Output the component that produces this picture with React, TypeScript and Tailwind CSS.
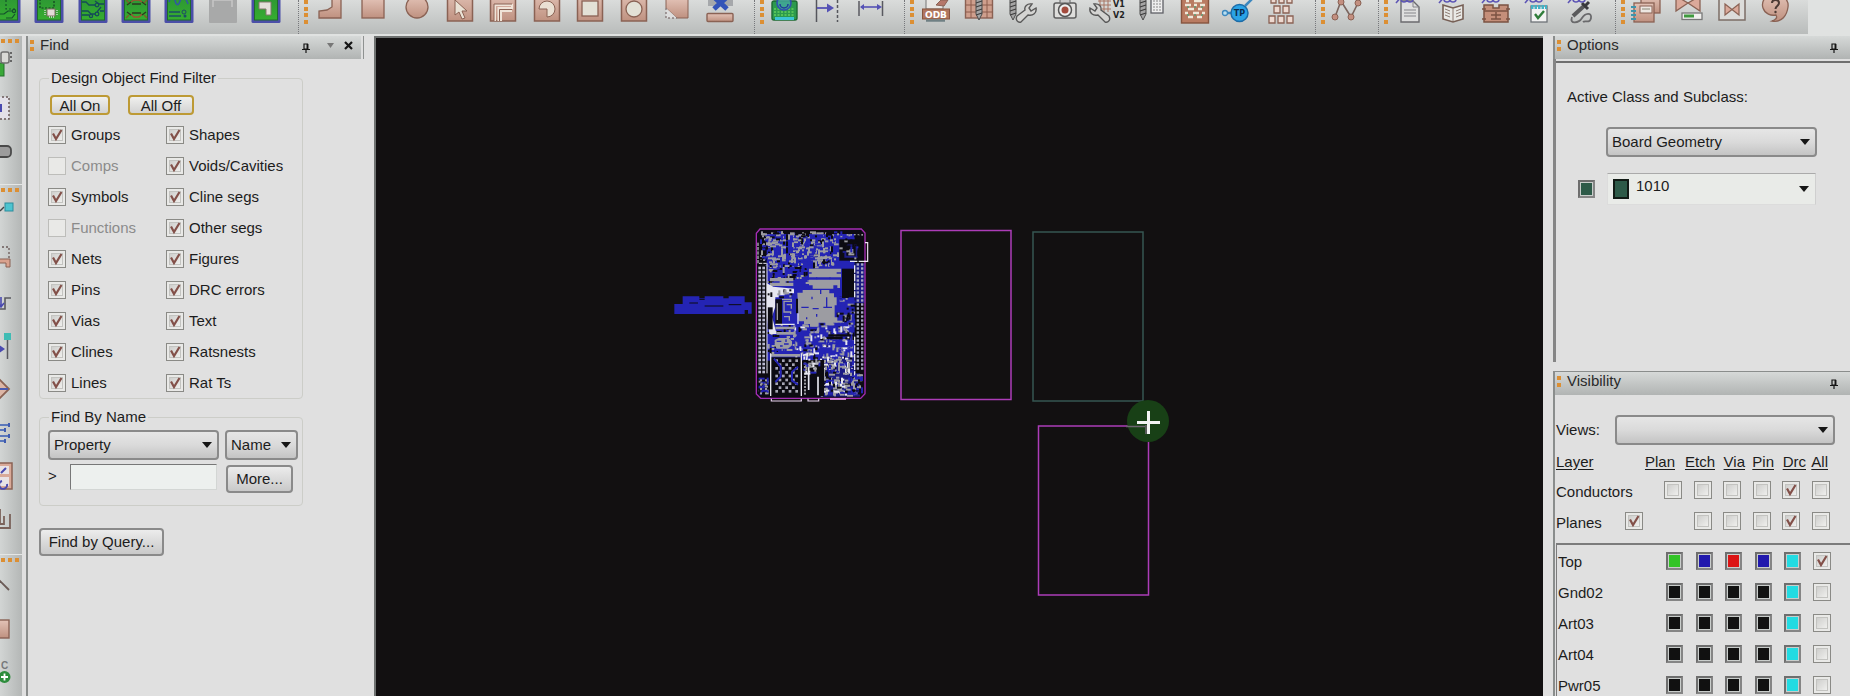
import React from "react";

/* ---------- shared drawing helpers ---------- */

const CU = "#8a6254";

function Defs() {
  return (
    <svg className="absolute h-0 w-0" aria-hidden="true">
      <defs>
        <linearGradient id="cu" x1="0" y1="0" x2="0" y2="1">
          <stop offset="0" stopColor="#e3c3b7" />
          <stop offset="1" stopColor="#bf9180" />
        </linearGradient>
        <linearGradient id="gr" x1="0" y1="0" x2="0" y2="1">
          <stop offset="0" stopColor="#2a8f35" />
          <stop offset="1" stopColor="#36ad30" />
        </linearGradient>
      </defs>
    </svg>
  );
}

const GreenBoard = ({ children }: { children?: React.ReactNode }) => (
  <g>
    <rect x="7.500" y="-10" width="29" height="33" rx="1.5" fill="#4b4ea8" />
    <rect x="10.5" y="-10" width="23" height="30" fill="url(#gr)" stroke="#1f6a2b" strokeWidth="1" />
    {children}
  </g>
);

const CuPlate = ({ children }: { children?: React.ReactNode }) => (
  <g>
    <rect x="9.500" y="-8" width="25" height="29" fill="url(#cu)" stroke={CU} strokeWidth="1.5" />
    {children}
  </g>
);

const Screw = ({ x }: { x: number }) => (
  <g>
    <path d={`M${x - 3} -2V14L${x} 20L${x + 3} 14V-2Z`} fill="#a5a5a5" stroke="#4c4c4c" />
    <path d={`M${x - 3} 3l6 -2M${x - 3} 7l6 -2M${x - 3} 11l6 -2M${x - 3} 15l6 -2`} stroke="#3d3d3d" strokeWidth="1.2" />
  </g>
);

const Wrench = ({ x, y }: { x: number; y: number }) => (
  <g transform={`translate(${x} ${y})`}>
    <path
      d="M1 12L9 6C8 3 11 -1 16 0L13 4L15 7L20 4C21 9 17 12 12 11L5 18C2 19 -1 16 1 12Z"
      fill="#d4d4d2"
      stroke="#575757"
      strokeWidth="1.4"
    />
  </g>
);

const Percent = () => (
  <g fill="none" stroke="#5d55b5" strokeWidth="1.6">
    <path d="M8 3L14 -4" />
    <circle cx="16" cy="-1" r="3" />
    <circle cx="22" cy="-1" r="3" />
  </g>
);

const ICONS: Record<string, React.ReactNode> = {
  traceBoard: (
    <GreenBoard>
      <g fill="none" stroke="#14502c" strokeWidth="1.2">
        <path d="M22 0V9H32" strokeDasharray="2 2" />
        <path d="M12 14H20L24 11H28M22 18H28L31 14" />
        <circle cx="30" cy="11" r="1.6" />
      </g>
    </GreenBoard>
  ),
  chipBoard: (
    <GreenBoard>
      <path d="M13 -1V8H27V-1" fill="none" stroke="#123f20" strokeWidth="1.2" strokeDasharray="2 1.5" />
      <rect x="20" y="9" width="8" height="7" fill="#e3dcd7" stroke="#7b6a60" />
      <path d="M18 10v5M30 10v5M22 17h5" stroke="#dedede" strokeWidth="1.3" strokeDasharray="1 1" />
    </GreenBoard>
  ),
  routeBoard: (
    <GreenBoard>
      <g fill="none" stroke="#154b58" strokeWidth="1.3">
        <path d="M11 2H15L18 5H24M24 1L28 4H33M11 11H17L20 14H24M11 15H18M26 12L30 7M33 11H29" />
        <circle cx="26" cy="5" r="1.8" />
        <circle cx="26" cy="14" r="1.8" />
        <circle cx="20" cy="16" r="1.6" />
      </g>
    </GreenBoard>
  ),
  meshBoard: (
    <GreenBoard>
      <g fill="none" strokeWidth="1.4">
        <path d="M17 2L20 0H25L28 2M17 14L20 17H25L28 14" stroke="#a14d33" />
        <path d="M13 5L17 2M13 12L17 15M32 5L28 2M32 12L28 15M18 4H27M18 13H27" stroke="#2c3a20" />
        <path d="M12 0l3 3M33 0l-3 3M12 18l3 -3M33 18l-3 -3" stroke="#7b5c2a" />
      </g>
    </GreenBoard>
  ),
  waveBoard: (
    <GreenBoard>
      <path d="M12 2C14 -5 17 -5 18 0S21 7 23 1S28 -4 31 4" fill="none" stroke="#3156a5" strokeWidth="1.5" />
      <path d="M12 12H23M12 16H24" stroke="#1c4d66" strokeWidth="1.4" />
      <circle cx="27" cy="12" r="2" fill="none" stroke="#1c4d66" />
      <circle cx="28" cy="16" r="1.5" fill="#1c4d66" />
    </GreenBoard>
  ),
  blank: (
    <g>
      <rect x="8" y="-2" width="28" height="25" rx="1" fill="#a8a9a9" />
      <path d="M12 7V0H31V7" fill="none" stroke="#c6c6c6" strokeWidth="1.5" />
    </g>
  ),
  shapeBoard: (
    <GreenBoard>
      <path d="M15 2H27V15H22V9H15Z" fill="#e4dfd9" stroke="#84776c" />
    </GreenBoard>
  ),
  poly: <path d="M24 -6H33V18H11V11L19 10L24 7Z" fill="url(#cu)" stroke={CU} strokeWidth="1.3" />,
  rect: <rect x="11" y="-2" width="22" height="20" fill="url(#cu)" stroke={CU} strokeWidth="1.3" />,
  circle: <circle cx="22" cy="7" r="11" fill="url(#cu)" stroke={CU} strokeWidth="1.3" />,
  select: (
    <CuPlate>
      <path d="M17 0V15L21 12L24 19L27 18L24 11H29Z" fill="#e9e1d4" stroke={CU} />
    </CuPlate>
  ),
  corner: (
    <CuPlate>
      <path d="M14 21V5H31V8H17.5V21M20 21V11H31" fill="none" stroke="#f0e4d8" strokeWidth="2" />
      <path d="M13 21V4H31M18.5 21V9.500H31" fill="none" stroke={CU} />
    </CuPlate>
  ),
  pie: (
    <CuPlate>
      <path d="M22 9H14A8 8 0 1 1 22 17Z" fill="#eae0d3" stroke={CU} />
    </CuPlate>
  ),
  squareVoid: (
    <CuPlate>
      <rect x="14" y="1" width="16" height="15" fill="#e3e1d6" stroke={CU} strokeWidth="1.3" />
    </CuPlate>
  ),
  circleVoid: (
    <CuPlate>
      <circle cx="22" cy="9" r="8" fill="#e3e1d6" stroke={CU} strokeWidth="1.3" />
    </CuPlate>
  ),
  cut: (
    <g>
      <path d="M11 -2H33V18H22L11 8Z" fill="url(#cu)" stroke={CU} />
      <path d="M11 8V18H22" fill="#ddd" stroke="#655" strokeDasharray="2 2" />
    </g>
  ),
  remove: (
    <g>
      <rect x="10" y="-2" width="25" height="8" fill="#a6a8ab" />
      <path d="M16 -3L29 9M29 -3L16 9" stroke="#3454b8" strokeWidth="5" />
      <rect x="9" y="13.500" width="26" height="8" rx="1" fill="url(#cu)" stroke={CU} strokeWidth="1.4" />
    </g>
  ),
  inspect: (
    <g>
      <rect x="9" y="1" width="25" height="19" rx="2" fill="#2c9a4d" stroke="#1d6a32" strokeWidth="1.4" />
      <path d="M11 9H32M11 12H32M11 15H32" stroke="#63d05e" strokeWidth="1.3" strokeDasharray="2 1.5" />
      <rect x="12" y="17" width="19" height="3" fill="#3bc5d4" />
      <circle cx="21" cy="3" r="7" fill="#45a7a0" fillOpacity="0.8" stroke="#3151b0" strokeWidth="1.600" />
      <path d="M17 4a4 4 0 0 0 8 0" fill="none" stroke="#203c9b" strokeWidth="1.5" />
    </g>
  ),
  offset: (
    <g>
      <path d="M10.500 0V22" stroke="#55565c" strokeWidth="1.5" />
      <path d="M31.500 0V22" stroke="#55565c" strokeWidth="1.5" strokeDasharray="3 2" />
      <path d="M11 8H22" stroke="#5552b5" strokeWidth="1.8" />
      <path d="M21 3.500L28 8L21 12.500Z" fill="#5552b5" />
    </g>
  ),
  measure: (
    <g>
      <path d="M10 1V16M33.500 1V16" stroke="#595a60" strokeWidth="1.5" />
      <path d="M12 7H31" stroke="#5552b5" strokeWidth="1.6" />
      <path d="M11 7L15 4V10ZM33 7L28 4V10Z" fill="#5552b5" />
    </g>
  ),
  odb: (
    <g>
      <rect x="12" y="-2" width="17" height="11" fill="#e9e7e4" stroke="#777" />
      <path d="M22 5L27 0H34L30 6Z" fill="#b5776a" stroke={CU} />
      <rect x="8.500" y="9" width="27" height="10" fill="#b0765f" stroke="#87543f" />
      <path d="M12 20.500H31" stroke="#6f8084" strokeWidth="2.500" />
      <text x="22" y="17.500" textAnchor="middle" fontSize="9" fontWeight="bold" fontFamily="DejaVu Sans" fill="#fff">ODB</text>
    </g>
  ),
  gridScrew: (
    <g>
      <rect x="8.500" y="-4" width="27" height="22" fill="#cf9f8d" stroke={CU} strokeWidth="1.4" />
      <path d="M8 5H36M8 12H36M14 -2V18M30 -2V18" stroke="#8c5c4c" />
      <Screw x={22} />
    </g>
  ),
  screwWrench: (
    <g>
      <Screw x={13} />
      <Wrench x={16} y={4} />
    </g>
  ),
  camera: (
    <g>
      <rect x="11" y="3" width="22" height="15" rx="2" fill="#dededc" stroke="#5d5d5d" strokeWidth="1.5" />
      <rect x="17" y="-2" width="10" height="5" fill="#c8c8c8" stroke="#666" />
      <circle cx="22" cy="10" r="6.500" fill="#eee" stroke="#555" strokeWidth="1.5" />
      <circle cx="22" cy="10" r="3.500" fill="#a34b3d" />
    </g>
  ),
  versions: (
    <g>
      <path d="M12 1H25M12 5H25M14 9H25M14 -2V12M18 -2V12M22 -2V12" stroke="#a77463" />
      <g transform="translate(27 0) scale(-1 1)">
        <Wrench x={3} y={4} />
      </g>
      <g fontSize="8" fontWeight="bold" fontFamily="DejaVu Sans" fill="#222">
        <text x="27" y="7">V1</text>
        <text x="27" y="18">V2</text>
      </g>
    </g>
  ),
  screwPage: (
    <g>
      <Screw x={13} />
      <rect x="21" y="-3" width="12" height="16" fill="#eee" stroke="#5f6066" strokeWidth="1.3" />
      <path d="M23 1H31M23 4H31M23 7H31M23 10H31" stroke="#888" strokeDasharray="2 1" />
    </g>
  ),
  padBoard: (
    <g>
      <rect x="8.500" y="-3" width="27" height="26" fill="#b97b62" stroke="#87543f" strokeWidth="1.4" />
      <path d="M12 5H18M21 5H24M27 5H32M15 9H21M25 9H29M12 13H15M20 13H26M29 13H32M15 17H20M24 17H29M13 1H16M21 1H29" stroke="#efe7d9" strokeWidth="2.500" />
      <path d="M14 7H32M14 15H32" stroke="#5c9c74" strokeWidth="1.500" strokeDasharray="2 5" />
    </g>
  ),
  testPoint: (
    <g>
      <path d="M10 13H18M29 6L36 -1" stroke="#3c87be" strokeWidth="2.500" />
      <circle cx="9" cy="13" r="2.500" fill="#b9dff0" stroke="#3c87be" strokeWidth="1.300" />
      <circle cx="23.500" cy="13" r="8.500" fill="#2aa3e6" stroke="#1c6ca8" strokeWidth="1.500" />
      <text x="23.500" y="16" textAnchor="middle" fontSize="8" fontWeight="bold" fontFamily="DejaVu Sans" fill="#0c2f52">TP</text>
    </g>
  ),
  boxes: (
    <g fill="#eed9d0" stroke={CU} strokeWidth="1.3">
      <path d="M12 -3h5v6h-5zM20 -3h5v6h-5zM28 -3h5v6h-5zM15 6h6v7h-6zM24 6h6v7h-6zM10 16h6v7h-6zM19 16h6v7h-6zM28 16h6v7h-6z" />
    </g>
  ),
  nodes: (
    <g>
      <path d="M11 17L17 1L27 17L34 3" fill="none" stroke="#7b665f" strokeWidth="1.600" />
      <g fill="#c38f80" stroke={CU}>
        <circle cx="11" cy="17" r="3" />
        <circle cx="17" cy="2" r="3" />
        <circle cx="27" cy="17" r="3" />
        <circle cx="34" cy="3" r="3" />
      </g>
    </g>
  ),
  page: (
    <g>
      <path d="M13 1H25L31 7V22H13Z" fill="#dfdfdf" stroke="#6b6b6f" strokeWidth="1.400" />
      <path d="M25 1V7H31M16 10H28M16 13H28M16 16H28" fill="none" stroke="#85858a" />
      <Percent />
    </g>
  ),
  book: (
    <g>
      <path d="M12 5L22 8L32 5V19L22 22L12 19Z" fill="#e9e9e6" stroke="#765f55" strokeWidth="1.600" />
      <path d="M22 8V21M14 9L19 11M14 12L19 14M14 15L19 17M30 9L25 11M30 12L25 14M30 15L25 17" stroke="#8c7b72" />
      <Percent />
    </g>
  ),
  chest: (
    <g>
      <path d="M10 5H19V8H25V5H34V22H10Z" fill="#c58f7a" stroke="#7b5343" strokeWidth="1.500" />
      <path d="M10 11H34M17 15H27M22 12V19M17 19H27M8 9H12M8 19H12M32 9H36M32 19H36" stroke="#7b5343" strokeWidth="1.500" />
      <Percent />
    </g>
  ),
  notes: (
    <g>
      <rect x="14" y="6" width="16" height="16" fill="#f2f2f2" stroke="#6d7277" strokeWidth="1.300" />
      <path d="M14 7H30" stroke="#43b2c5" strokeWidth="4" strokeDasharray="2.500 1" />
      <path d="M18 14L21 18L27 11" fill="none" stroke="#2f7d3a" strokeWidth="2.400" />
      <Percent />
    </g>
  ),
  probe: (
    <g>
      <path d="M13 16L24 6" stroke="#5a5a5c" strokeWidth="4" />
      <path d="M22 3L28 9M25 6L29 2" stroke="#39393b" strokeWidth="3" />
      <path d="M12 17C9 25 19 23 22 18S32 12 31 18S25 20 23 22" fill="none" stroke="#6a6a6c" strokeWidth="1.800" />
      <Percent />
    </g>
  ),
  binders: (
    <g>
      <rect x="17" y="-4" width="19" height="17" fill="url(#cu)" stroke={CU} strokeWidth="1.300" />
      <rect x="10" y="3" width="20" height="19" fill="url(#cu)" stroke={CU} strokeWidth="1.300" />
      <rect x="16" y="6" width="12" height="7" fill="#ede7e2" stroke={CU} />
      <path d="M18 9H26" stroke="#887" />
      <path d="M7 7H12M7 11H12M7 15H12M7 19H12" stroke="#3c95ad" strokeWidth="1.800" />
    </g>
  ),
  bowBar: (
    <g>
      <path d="M9 -4V11L21 3L33 11V-4L21 3Z" fill="#dba99a" stroke={CU} strokeWidth="1.300" />
      <rect x="15" y="13" width="20" height="6.500" fill="#f0f0ee" stroke="#777" strokeWidth="1.300" />
      <path d="M17 16H27" stroke="#3f9a3e" strokeWidth="3" />
    </g>
  ),
  bowFrame: (
    <g>
      <rect x="9" y="-4" width="26" height="24" fill="#dcdcda" stroke="#7c6d66" strokeWidth="1.500" />
      <path d="M15 4V15L22 9.500L29 15V4L22 9.500Z" fill="#dba99a" stroke={CU} strokeWidth="1.200" />
    </g>
  ),
  help: (
    <g>
      <path d="M22 -6C12 -6 8 2 10 8C12 14 18 16 23 15C25 18 22 20 19 21C29 23 34 15 35 7C36 0 30 -6 22 -6Z" fill="url(#cu)" stroke={CU} strokeWidth="1.300" />
      <path d="M19 3C19 -1 26 -1 26 3C26 6 22.500 6 22.500 9" fill="none" stroke="#4d3a34" strokeWidth="2" />
      <circle cx="22.500" cy="12" r="1.200" fill="#4d3a34" />
    </g>
  ),
};

/* ---------- toolbar ---------- */

const Grip = () => (
  <span className="flex h-6 w-1 flex-none flex-col justify-between" aria-hidden="true">
    <span className="h-1 bg-[#dc8f33]" />
    <span className="h-1 bg-[#dc8f33]" />
    <span className="h-1 bg-[#dc8f33]" />
    <span className="h-1 bg-[#dc8f33]" />
  </span>
);

function ToolGroup({ width, icons, first }: { width: string; icons: string[]; first?: boolean }) {
  return (
    <div
      className={
        first
          ? `flex flex-none ${width} pr-2.5`
          : `flex flex-none ${width} border-l border-dotted border-[#77787c] pl-[5px] pr-3`
      }
    >
      {!first && <Grip />}
      {icons.map((name, i) => (
        <button key={i} type="button" aria-label={name} className="flex min-w-0 flex-1 justify-center">
          <svg width="44" height="34" viewBox="0 0 44 34" className="flex-none">
            {ICONS[name]}
          </svg>
        </button>
      ))}
    </div>
  );
}

function Toolbar() {
  return (
    <div className="flex h-9 flex-none bg-[#e0e2e1]" role="toolbar">
      <div className="flex h-[34px] overflow-hidden bg-linear-to-b from-[#dadcdb] to-[#b9bcbb]">
        <div className="-ml-4 flex flex-none">
          <ToolGroup
            first
            width="w-[314px]"
            icons={["traceBoard", "chipBoard", "routeBoard", "meshBoard", "waveBoard", "blank", "shapeBoard"]}
          />
          <ToolGroup
            width="w-[456px]"
            icons={["poly", "rect", "circle", "select", "corner", "pie", "squareVoid", "circleVoid", "cut", "remove"]}
          />
          <ToolGroup width="w-[150px]" icons={["inspect", "offset", "measure"]} />
          <ToolGroup
            width="w-[411px]"
            icons={["odb", "gridScrew", "screwWrench", "camera", "versions", "screwPage", "padBoard", "testPoint", "boxes"]}
          />
          <ToolGroup width="w-[63px]" icons={["nodes"]} />
          <ToolGroup width="w-[237px]" icons={["page", "book", "chest", "notes", "probe"]} />
          <ToolGroup width="w-[193px]" icons={["binders", "bowBar", "bowFrame", "help"]} />
        </div>
      </div>
    </div>
  );
}

/* ---------- left rail ---------- */

const RAIL: { name: string; art: React.ReactNode }[][] = [
  [
    {
      name: "Place part",
      art: (
        <g>
          <rect x="-6" y="20" width="10" height="13" fill="#39a838" stroke="#22702a" />
          <rect x="1" y="9" width="8" height="11" rx="2" fill="#d9d9d6" stroke="#6f6f6f" strokeWidth="1.500" />
          <path d="M11 9V20" stroke="#666" strokeWidth="2" strokeDasharray="2 2" />
        </g>
      ),
    },
    {
      name: "Name part",
      art: (
        <g>
          <path d="M-2 11H9V33H-2" fill="#e3e1e8" stroke="#6a5a58" strokeWidth="1.500" strokeDasharray="2 2" />
          <path d="M-4 26V19H1V26" fill="none" stroke="#4a4ab0" strokeWidth="2" />
        </g>
      ),
    },
    {
      name: "Capsule",
      art: <rect x="-8" y="17" width="19" height="11" rx="4" fill="#9c9c9c" stroke="#4a4a4a" strokeWidth="1.800" />,
    },
  ],
  [
    {
      name: "Pin",
      art: (
        <g>
          <path d="M0 15L4 11" stroke="#444" strokeWidth="1.500" />
          <rect x="5" y="7" width="8" height="8" fill="#4dc4d0" stroke="#2c8c9c" />
        </g>
      ),
    },
    {
      name: "Bracket",
      art: (
        <g>
          <path d="M-2 8H9V20" fill="none" stroke="#6a5a58" strokeWidth="1.300" strokeDasharray="2 2" />
          <path d="M-4 20H10V28H6V24H-4Z" fill="#d9a28e" stroke={CU} />
        </g>
      ),
    },
    {
      name: "Delay tune",
      art: (
        <g fill="none" strokeWidth="1.600">
          <path d="M-2 27H5V16H11" stroke="#5a5a60" />
          <path d="M1 15V25M-2 21L1 25L4 21" stroke="#4a4ab0" />
        </g>
      ),
    },
    {
      name: "Slide",
      art: (
        <g>
          <path d="M7.500 10V34" stroke="#5a5a60" strokeWidth="1.500" />
          <rect x="4" y="8" width="7" height="7" fill="#3fbcb4" />
          <path d="M-2 19L5 24L-2 29Z" fill="#4a4ab0" />
        </g>
      ),
    },
    {
      name: "Miter",
      art: (
        <g>
          <path d="M-8 20L0 12L9 21L0 30Z" fill="#dcb6a6" stroke={CU} strokeWidth="1.800" />
          <path d="M-2 21H8" stroke="#4a5ab0" strokeWidth="2" />
        </g>
      ),
    },
    {
      name: "Bus route",
      art: (
        <g>
          <path d="M0 14H10M0 19H6M0 25H10M0 30H6" stroke="#5b78bb" strokeWidth="1.800" />
          <path d="M8 14h2M4 19h2M8 25h2M4 30h2" stroke="#3f5cb0" strokeWidth="4" />
        </g>
      ),
    },
    {
      name: "Fanout",
      art: (
        <g>
          <rect x="-8" y="9" width="20" height="26" fill="#d9aa99" stroke={CU} strokeWidth="1.500" />
          <rect x="-2" y="12" width="11" height="8" fill="#e9e3e6" />
          <rect x="-2" y="23" width="11" height="9" fill="#e9e3e6" />
          <path d="M1 19L6 14M2 27a4 4 0 1 0 5 3" fill="none" stroke="#4a4ab0" strokeWidth="2" />
        </g>
      ),
    },
    {
      name: "Tail",
      art: (
        <path d="M0 12V27H4V19M10 17V31H0" fill="none" stroke="#7b625a" strokeWidth="1.800" />
      ),
    },
  ],
  [
    { name: "Line", art: <path d="M-2 13L9 24" stroke="#6a5a56" strokeWidth="1.800" /> },
    {
      name: "Rectangle",
      art: <rect x="-8" y="11" width="17" height="18" fill="url(#cu)" stroke={CU} strokeWidth="1.400" />,
    },
    {
      name: "Add",
      art: (
        <g>
          <text x="1" y="17" fontSize="10" fontWeight="bold" fontFamily="Liberation Sans" fill="#77797b">C</text>
          <circle cx="4.500" cy="25" r="6" fill="#2d8d3c" />
          <path d="M4.500 21.500V28.500M1 25H8" stroke="#fff" strokeWidth="1.800" />
        </g>
      ),
    },
  ],
];

function Rail() {
  return (
    <nav className="flex w-[22px] flex-none flex-col overflow-hidden bg-linear-to-r from-[#d2d5d4] to-[#b4b7b6]" aria-label="Tools">
      {RAIL.map((group, i) => (
        <div key={i} className={i === 0 ? "flex h-[148px] flex-none flex-col" : "flex flex-none flex-col border-t border-[#e4e6e5] pb-3.5"}>
          <span
            className={i === 0 ? "mt-[3px] flex h-1 flex-none gap-[3px] pl-px" : "mb-1 mt-[3px] flex h-1 flex-none gap-[3px] pl-px"}
            aria-hidden="true"
          >
            <span className="w-1 bg-[#dc8f33]" />
            <span className="w-1 bg-[#dc8f33]" />
            <span className="w-1 bg-[#dc8f33]" />
          </span>
          {group.map((t) => (
            <button key={t.name} type="button" aria-label={t.name} className="h-[43px] flex-none">
              <svg width="22" height="43" viewBox="0 0 22 43">
                {t.art}
              </svg>
            </button>
          ))}
        </div>
      ))}
    </nav>
  );
}

/* ---------- widgets ---------- */

const Pin = () => (
  <svg width="10" height="12" viewBox="0 0 10 12">
    <path d="M3 2H6.500V7H3Z" fill="none" stroke="#151515" strokeWidth="1.200" />
    <path d="M6.500 2V7" stroke="#151515" strokeWidth="1.800" />
    <path d="M1 7.500H9M5 8V11" stroke="#151515" strokeWidth="1.200" />
  </svg>
);

function PanelTitle({ title, children }: { title: string; children?: React.ReactNode }) {
  return (
    <header className="flex h-[23px] flex-none items-center bg-linear-to-b from-[#d6d9d8] to-[#b1b4b3] pl-0.5">
      <span className="mr-1.5 flex flex-col gap-[3px] pb-1" aria-hidden="true">
        <span className="h-1 w-1 bg-[#dc8f33]" />
        <span className="h-1 w-1 bg-[#dc8f33]" />
      </span>
      <h2 className="flex-1 pb-1.5 text-[15px] leading-4 text-[#2a2a2a]">{title}</h2>
      {children}
    </header>
  );
}

type TickProps = { label?: string; name: string; checked?: boolean; disabled?: boolean };

function Tick({ label, name, checked, disabled }: TickProps) {
  const border = disabled && !checked ? "border-[#bdbdba]" : "border-[#8a8a86]";
  return (
    <label className={disabled ? "flex items-center gap-[5px] text-[#8b8b8b]" : "flex items-center gap-[5px]"}>
      <span className="grid h-[18px] w-[18px] flex-none place-items-center">
        <input
          type="checkbox"
          defaultChecked={checked}
          disabled={disabled}
          aria-label={label ? undefined : name}
          className={`peer col-start-1 row-start-1 h-[18px] w-[18px] appearance-none border ${border} bg-[#e9e9e7]`}
        />
        {!disabled && (
          <span className="pointer-events-none col-start-1 row-start-1 h-3 w-3 border border-[#c3c3c0] bg-linear-to-br from-[#cfcfcd] to-[#efefed]" />
        )}
        <svg
          width="16"
          height="16"
          viewBox="0 0 16 16"
          className="pointer-events-none invisible col-start-1 row-start-1 peer-checked:visible"
        >
          <path d="M4 6.500L7 12L12.500 3" fill="none" stroke="#835049" strokeWidth="2.200" />
        </svg>
      </span>
      {label}
    </label>
  );
}

function Drop({ label, options, className }: { label: string; options: string[]; className: string }) {
  return (
    <span className={`grid h-[30px] items-center ${className}`}>
      <select
        aria-label={label}
        className="col-start-1 row-start-1 h-full w-full appearance-none rounded border-2 border-[#8a8a8a] bg-linear-to-b from-[#e6e6e6] via-[#dadada] to-[#c4c4c4] pl-1 text-[15px]"
      >
        {options.map((o) => (
          <option key={o}>{o}</option>
        ))}
      </select>
      <Arrow />
    </span>
  );
}

const Arrow = () => (
  <svg width="10" height="6" viewBox="0 0 10 6" className="pointer-events-none col-start-1 row-start-1 mr-[7px] justify-self-end">
    <path d="M0 0H10L5 6Z" fill="#161616" />
  </svg>
);

const PUSH = "h-7 rounded border-2 border-[#8a8a8a] bg-linear-to-b from-[#ececec] to-[#c9c9c9] text-[15px] leading-5";
const GOLD = "h-5 rounded border-2 border-[#bd9a35] bg-linear-to-b from-[#f0f0ee] to-[#d2d2d2] pt-px text-[15px] leading-4";

/* ---------- find panel ---------- */

const FILTERS: [TickProps, TickProps][] = [
  [{ name: "Groups", checked: true }, { name: "Shapes", checked: true }],
  [{ name: "Comps", disabled: true }, { name: "Voids/Cavities", checked: true }],
  [{ name: "Symbols", checked: true }, { name: "Cline segs", checked: true }],
  [{ name: "Functions", disabled: true }, { name: "Other segs", checked: true }],
  [{ name: "Nets", checked: true }, { name: "Figures", checked: true }],
  [{ name: "Pins", checked: true }, { name: "DRC errors", checked: true }],
  [{ name: "Vias", checked: true }, { name: "Text", checked: true }],
  [{ name: "Clines", checked: true }, { name: "Ratsnests", checked: true }],
  [{ name: "Lines", checked: true }, { name: "Rat Ts", checked: true }],
];

function FindPanel() {
  return (
    <section className="ml-1 flex w-[348px] flex-none flex-col border-l-2 border-[#8a8d8c] bg-[#e0e0e0]">
      <div className="mr-[10px] border-r border-[#8f9291] pr-0.5">
        <PanelTitle title="Find">
          <button type="button" aria-label="Pin panel" className="mr-4"><Pin /></button>
          <button type="button" aria-label="Panel menu" className="mr-2.5 pb-1">
            <svg width="7" height="5" viewBox="0 0 7 5"><path d="M0 0H7L3.500 5Z" fill="#777" /></svg>
          </button>
          <button type="button" aria-label="Close panel" className="mr-2 pb-1">
            <svg width="9" height="9" viewBox="0 0 9 9"><path d="M1 1L8 8M8 1L1 8" stroke="#151515" strokeWidth="2.200" /></svg>
          </button>
        </PanelTitle>
      </div>
      <div className="flex flex-col items-start pl-[11px] pt-[9px]">
        <fieldset className="w-[264px] rounded-sm border border-[#cccdc8] px-2">
          <legend className="px-0.5 leading-5 ml-px">Design Object Find Filter</legend>
          <div className="mt-[7px] flex gap-[18px] pl-0.5">
            <button type="button" className={`${GOLD} w-[60px]`}>All On</button>
            <button type="button" className={`${GOLD} w-[66px]`}>All Off</button>
          </div>
          <div className="mt-1 grid grid-cols-[118px_1fr]">
            {FILTERS.map(([a, b]) => (
              <React.Fragment key={a.name}>
                <div className="flex h-[31px] items-center"><Tick {...a} label={a.name} /></div>
                <div className="flex h-[31px] items-center"><Tick {...b} label={b.name} /></div>
              </React.Fragment>
            ))}
          </div>
        </fieldset>
        <fieldset className="mt-2 w-[264px] rounded-sm border border-[#cccdc8] pb-3 pl-2 pr-1">
          <legend className="px-0.5 leading-5 ml-px">Find By Name</legend>
          <div className="mt-[3px] flex gap-1.5">
            <Drop label="Find by" options={["Property", "Net", "Symbol"]} className="w-[171px]" />
            <Drop label="Match" options={["Name", "List"]} className="w-[73px]" />
          </div>
          <div className="mt-1 flex">
            <label htmlFor="find-name" className="w-[22px] leading-6">&gt;</label>
            <input
              id="find-name"
              type="text"
              className="h-[26px] w-[147px] border border-b-[#d3d6d4] border-l-[#777] border-r-[#d3d6d4] border-t-[#777] bg-[#edf0ee] px-1"
            />
            <button type="button" className={`${PUSH} ml-[9px] mt-px w-[67px]`}>More...</button>
          </div>
        </fieldset>
        <button type="button" className={`${PUSH} mt-[22px] w-[125px]`}>Find by Query...</button>
      </div>
    </section>
  );
}

/* ---------- board drawing ---------- */

const BLUE = "#2424b4";
const GREY = "#9c9ca2";
const WHITE = "#e6e6f0";
const INK = "#0c0b12";

function noise(seed: number) {
  let s = seed;
  return () => {
    s = (s * 1103515245 + 12345) & 0x7fffffff;
    return s / 0x7fffffff;
  };
}

/* Scatters short horizontal and vertical runs of copper over a region. */
function scatter(seed: number, x: number, y: number, w: number, h: number, n: number, colors: string[]) {
  const r = noise(seed);
  const out: React.ReactNode[] = [];
  for (let i = 0; i < n; i++) {
    const long = 6 + Math.floor(r() * 4) * 4;
    const flat = r() > 0.45;
    const rw = flat ? long : 6;
    const rh = flat ? 6 : long;
    const rx = x + Math.floor((r() * Math.max(w - rw, 1)) / 3) * 3;
    const ry = y + Math.floor((r() * Math.max(h - rh, 1)) / 3) * 3;
    out.push(<rect key={`${seed}-${i}`} x={rx} y={ry} width={rw} height={rh} fill={colors[Math.floor(r() * colors.length)]} />);
  }
  return out;
}

function pads(x: number, y: number, cols: number, rows: number, dx: number, dy: number, size: number, fill: string) {
  const out: React.ReactNode[] = [];
  for (let i = 0; i < cols; i++)
    for (let j = 0; j < rows; j++)
      out.push(<rect key={`${x}-${y}-${i}-${j}`} x={x + i * dx} y={y + j * dy} width={size} height={size} fill={fill} />);
  return out;
}

function Board() {
  return (
    <svg x="660" y="210" width="230" height="210" viewBox="0 0 690 630">
      <path d="M43 282H68V259H118V265H134V259H190V265H206V259H254V277H275V311H264V300H254V312H43Z" fill={BLUE} />
      <path d="M88 279H114M134 288H190M206 284H244M118 268H134" stroke={INK} strokeWidth="3" />
      <path d="M300 57H604L615 69V551L602 565H302L289 552V70Z" fill={INK} />

      <rect x="320" y="72" width="264" height="380" fill={BLUE} />
      <rect x="480" y="440" width="120" height="120" fill="#1c1c84" />
      {scatter(7, 300, 64, 240, 114, 330, [GREY, GREY, GREY, BLUE, BLUE, INK])}
      {scatter(11, 320, 165, 130, 60, 60, [GREY, BLUE, INK])}
      {scatter(19, 400, 340, 190, 110, 210, [GREY, GREY, BLUE, BLUE, INK, WHITE])}
      {scatter(23, 480, 440, 110, 122, 190, [GREY, GREY, BLUE, INK, WHITE])}
      {scatter(29, 530, 230, 60, 120, 70, [GREY, BLUE, BLUE, INK])}
      {scatter(43, 320, 345, 90, 90, 50, [GREY, BLUE, INK])}

      <rect x="538" y="88" width="74" height="64" fill={INK} />
      <path d="M556 106H590V140H556V126H548" fill="none" stroke="#1c1c84" strokeWidth="6" />
      <rect x="568" y="117" width="12" height="12" fill={GREY} />
      {pads(560, 72, 5, 1, 11, 10, 5, GREY)}
      {scatter(47, 538, 64, 70, 90, 26, [BLUE, GREY, INK])}
      <rect x="546" y="176" width="36" height="86" fill={INK} />
      <path d="M447 176H543V202H447ZM447 209H540V234H532V226H520V236H458V226H447Z" fill={GREY} />
      <path d="M447 189H455M530 189H543M470 202V208M510 202V208" stroke={BLUE} strokeWidth="4" />
      <path d="M412 248H428V240H508V250H522V262H530V286H524V322H532V338H520V346H496V338H476V350H450V342H432V334H416Z" fill={GREY} />
      <path d="M424 292H446M458 296H476M490 292H516M482 240V252M456 260V268M500 262V290M470 312V320M440 322V328" stroke={BLUE} strokeWidth="4" />
      <path d="M330 204H400V214H330ZM330 218H400V228H330Z" fill={GREY} />
      <path d="M318 218L340 230L402 236V250H374V256H356V262H346V290L336 320L350 372H328L318 300Z" fill={WHITE} />
      {scatter(53, 322, 238, 80, 28, 14, [GREY, INK])}
      <rect x="323" y="292" width="15" height="66" fill={INK} />
      <path d="M346 268H366V344H346ZM408 266H414V310H408Z" fill={INK} />
      <path d="M366 268H394V274H372V306H392V312M380 284H394V296M372 320H388V332M352 280V330" fill="none" stroke={GREY} strokeWidth="4" />
      <path d="M346 343H404M414 310V342" stroke={WHITE} strokeWidth="4" />
      <path d="M346 350H404V358H346ZM350 366H402V374H350ZM344 390L356 384H386L396 394V406L384 416H350L344 406Z" fill={GREY} />
      <path d="M350 394H364M372 402H386M360 408H368M378 388V396" stroke={BLUE} strokeWidth="4" />
      <path d="M330 432H420V440H330Z" fill={GREY} />

      <rect x="290" y="168" width="30" height="330" fill={INK} />
      {pads(295, 170, 2, 27, 12, 12, 8, "#b9b9d0")}
      <path d="M321 160V490" stroke={WHITE} strokeWidth="3" />
      <path d="M294 98V160H320" fill="none" stroke={WHITE} strokeWidth="3" strokeDasharray="10 3" />
      <rect x="586" y="160" width="28" height="120" fill="#1c1c84" />
      <rect x="586" y="280" width="28" height="210" fill={INK} />
      {pads(590, 160, 2, 27, 13, 12, 7, "#a9a9c6")}
      <path d="M584 166V262M584 380V500M570 154H620" stroke={WHITE} strokeWidth="4" strokeDasharray="22 4" />
      {scatter(59, 576, 490, 36, 70, 34, [BLUE, GREY, INK])}
      <rect x="546" y="244" width="20" height="20" fill={INK} />
      <path d="M505 376H572M500 384H548" stroke={INK} strokeWidth="7" />

      <rect x="332" y="442" width="92" height="116" fill={INK} />
      {pads(346, 448, 4, 5, 20, 23, 8, "#a5a5b4")}
      {pads(356, 460, 3, 4, 20, 23, 8, "#a5a5b4")}
      <path d="M342 446L362 470V500L346 516M414 470L396 486V512L414 524" fill="none" stroke={BLUE} strokeWidth="6" />
      <path d="M332 430V558M424 430V558" stroke={WHITE} strokeWidth="4" />
      <rect x="428" y="450" width="64" height="108" fill={INK} />
      {pads(432, 458, 1, 10, 10, 10, 6, GREY)}
      <path d="M446 462V540M474 500V556M428 436L442 432L440 450" fill="none" stroke={WHITE} strokeWidth="5" />
      {scatter(31, 430, 446, 60, 50, 22, [WHITE, BLUE, GREY])}
      {scatter(37, 296, 500, 34, 56, 26, [BLUE, BLUE, GREY, INK])}
      {pads(300, 508, 2, 4, 15, 13, 6, GREY)}

      <path d="M300 57H604L615 69V551L602 565H302L289 552V70Z" fill="none" stroke="#a42cb4" strokeWidth="4" />
      <path d="M615 98H623V154H612" fill="none" stroke="#f0e4f6" strokeWidth="3.500" />
      <path d="M334 566V573H424V566M444 566V573H476V566" fill="none" stroke="#e9d3f2" strokeWidth="3.500" />
      <path d="M510 567H558" stroke="#ec9cf0" strokeWidth="5" />
    </svg>
  );
}

function DesignCanvas() {
  return (
    <main className="min-w-0 flex-1 overflow-hidden border-l-2 border-t-2 border-[#6f7271] bg-[#121011]">
      <svg width="100%" height="100%" role="img" aria-label="Board layout">
        <g transform="translate(-376 -38)">
          <Board />
          <g fill="none" strokeWidth="1.500">
            <rect x="901" y="230.500" width="110" height="169" stroke="#ac3cb8" />
            <rect x="1033" y="232" width="110" height="169" stroke="#365652" />
            <rect x="1038.500" y="426" width="110" height="169" stroke="#ac3cb8" />
          </g>
          <circle cx="1148" cy="421" r="21" fill="#184016" />
          <path d="M1126 426.500H1145M1146 425V434" stroke="#6d6470" strokeWidth="1.500" />
          <path d="M1148.500 411V434M1137 422.500H1160" stroke="#f3f3f3" strokeWidth="3" />
        </g>
      </svg>
    </main>
  );
}

/* ---------- right side ---------- */

function Chip({ color, name }: { color: string; name: string }) {
  return (
    <button
      type="button"
      aria-label={name}
      className="block h-[18px] w-[17px] border-2 border-b-[#858585] border-l-[#6e6e6e] border-r-[#858585] border-t-[#6e6e6e] bg-[#c9cdcb] p-px"
    >
      <span className={`block h-full w-full ${color}`} />
    </button>
  );
}

function OptionsPanel() {
  return (
    <section className="flex h-[326px] flex-none flex-col">
      <div className="border-l-2 border-[#8a8d8c]">
        <PanelTitle title="Options">
          <button type="button" aria-label="Pin options" className="mr-[11px]"><Pin /></button>
        </PanelTitle>
      </div>
      <div className="flex-1 border-l-[3px] border-[#858585] pt-0.5">
        <div className="flex flex-col border-t-2 border-[#6f6f6f] pl-[11px] pt-6">
          <p className="leading-5">Active Class and Subclass:</p>
          <div className="mt-5 pl-[39px]">
            <Drop label="Active class" options={["Board Geometry", "Etch"]} className="w-[211px]" />
          </div>
          <div className="mt-4 flex items-center gap-3 pl-[11px]">
            <Chip color="bg-[#2d5a48]" name="Subclass color" />
            <span className="grid h-8 w-[209px] items-center">
              <select
                aria-label="Active subclass"
                className="col-start-1 row-start-1 h-full w-full appearance-none border border-t-[#aaaaaa] border-l-[#dcdcdc] border-r-[#cfcfcf] border-b-[#dcdcdc] bg-[#e9ebe8] pb-1.5 pl-7 text-[15px]"
              >
                <option>1010</option>
                <option>Outline</option>
              </select>
              <span className="pointer-events-none col-start-1 row-start-1 ml-1.5 h-5 w-4 border-2 border-[#111a15] bg-[#2d5a48]" />
              <Arrow />
            </span>
          </div>
        </div>
      </div>
    </section>
  );
}

const COLS = (
  <colgroup>
    <col className="w-[62px]" />
    <col className="w-10" />
    <col className="w-[30px]" />
    <col className="w-[29px]" />
    <col className="w-[30px]" />
    <col className="w-[29px]" />
    <col className="w-[30px]" />
    <col className="w-[29px]" />
  </colgroup>
);

const BLACK = "bg-[#111111]";
const CYAN = "bg-[#22dbe2]";
const HEAD = "p-0 font-normal underline underline-offset-2";

const LAYERS = [
  { name: "Top", colors: ["bg-[#32c427]", "bg-[#2119ad]", "bg-[#dc1414]", "bg-[#2119ad]", CYAN], all: true },
  { name: "Gnd02", colors: [BLACK, BLACK, BLACK, BLACK, CYAN], all: false },
  { name: "Art03", colors: [BLACK, BLACK, BLACK, BLACK, CYAN], all: false },
  { name: "Art04", colors: [BLACK, BLACK, BLACK, BLACK, CYAN], all: false },
  { name: "Pwr05", colors: [BLACK, BLACK, BLACK, BLACK, CYAN], all: false },
];

function VisibilityPanel() {
  return (
    <section className="mt-[9px] flex min-h-0 flex-1 flex-col border-l-2 border-t border-[#8a8d8c]">
      <PanelTitle title="Visibility">
        <button type="button" aria-label="Pin visibility" className="mr-[11px]"><Pin /></button>
      </PanelTitle>
      <div className="mt-5 flex items-center pl-px">
        <span className="w-[59px]">Views:</span>
        <Drop label="Views" options={[""]} className="w-[220px]" />
      </div>
      <table className="ml-px mt-1 w-[279px] table-fixed border-collapse">
        {COLS}
        <thead>
          <tr className="h-[25px]">
            <th className={`${HEAD} text-left`}>Layer</th>
            <th colSpan={2} className={HEAD}><div className="flex justify-end pr-[13px]">Plan</div></th>
            <th className={HEAD}><div className="flex justify-end pr-0.5">Etch</div></th>
            <th className={HEAD}><div className="flex justify-end pr-0.5">Via</div></th>
            <th className={HEAD}><div className="flex justify-end pr-0.5">Pin</div></th>
            <th className={HEAD}><div className="flex justify-end">Drc</div></th>
            <th className={HEAD}><div className="flex justify-end pr-[7px]">All</div></th>
          </tr>
        </thead>
        <tbody>
          {["Conductors", "Planes"].map((row) => (
            <tr key={row} className="h-[31px]">
              <td colSpan={row === "Planes" ? 1 : 2} className="p-0 pt-1">{row}</td>
              {row === "Planes" && <td className="p-0 pl-[7px]"><Tick name="Planes" checked /></td>}
              {["Plan", "Etch", "Via", "Pin", "Drc", "All"].map((c) => (
                <td key={c} className="p-0 pl-1.5">
                  {!(row === "Planes" && c === "Plan") && <Tick name={`${row} ${c}`} checked={c === "Drc"} />}
                </td>
              ))}
            </tr>
          ))}
        </tbody>
      </table>
      <div className="ml-px mt-[7px] border-l border-t-2 border-[#7c7c7c]">
        <table className="ml-px w-[279px] table-fixed border-collapse">
          {COLS}
          <tbody>
            {LAYERS.map((l) => (
              <tr key={l.name} className="h-[31px]">
                <td colSpan={2} className="p-0 pt-0.5">{l.name}</td>
                {l.colors.map((c, i) => (
                  <td key={i} className="p-0 pl-1.5"><Chip color={c} name={`${l.name} color ${i + 1}`} /></td>
                ))}
                <td className="p-0 pl-[5px]"><Tick name={`${l.name} all`} checked={l.all} /></td>
              </tr>
            ))}
          </tbody>
        </table>
      </div>
    </section>
  );
}

export default function App() {
  return (
    <div className="flex h-screen flex-col overflow-hidden bg-[#e0e0e0] font-['Liberation_Sans',Arial,sans-serif] text-[15px] leading-5 text-[#1c1c1c]">
      <Defs />
      <Toolbar />
      <div className="flex min-h-0 flex-1">
        <Rail />
        <FindPanel />
        <DesignCanvas />
        <aside className="flex w-[307px] flex-none flex-col pl-[10px]">
          <OptionsPanel />
          <VisibilityPanel />
        </aside>
      </div>
    </div>
  );
}
